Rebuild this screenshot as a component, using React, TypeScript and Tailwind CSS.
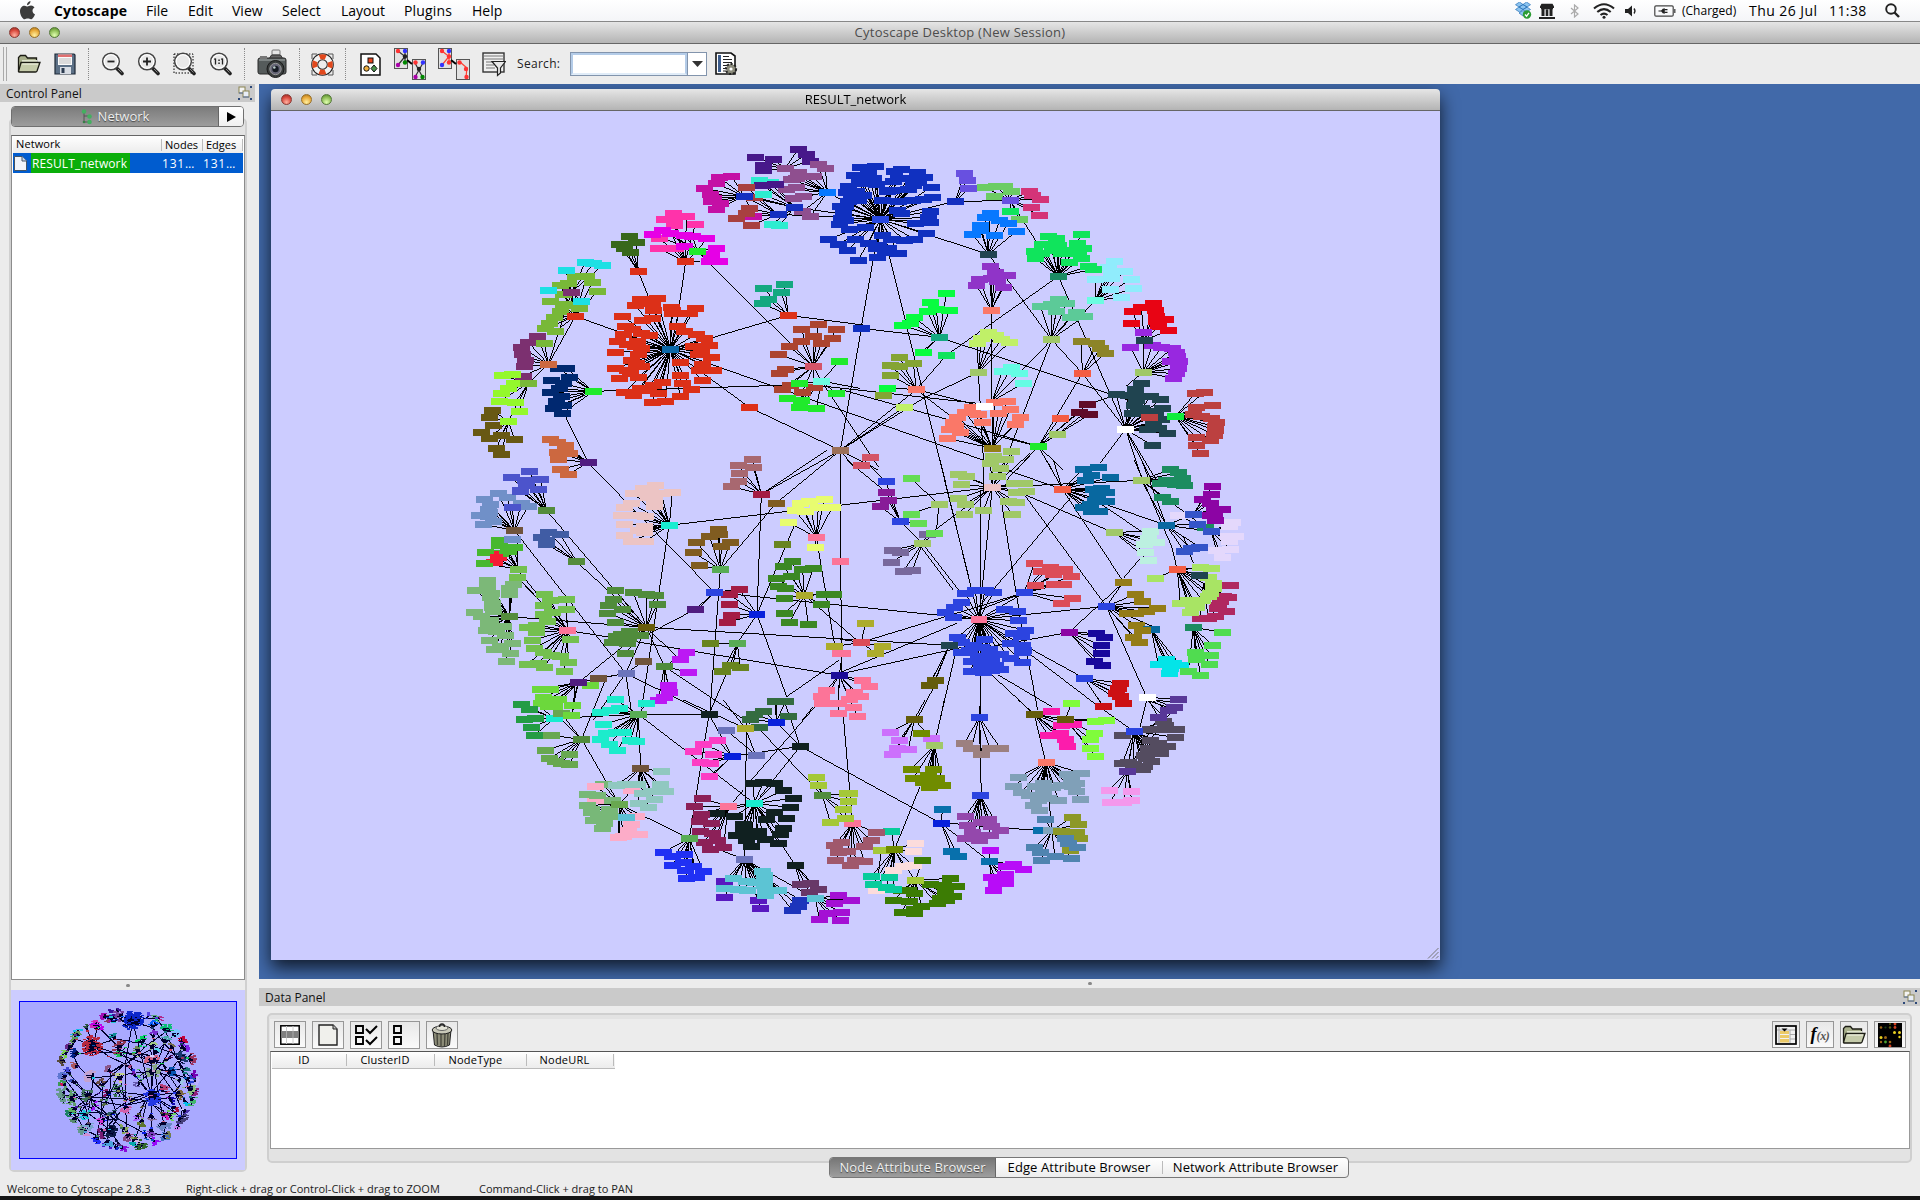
import React from "react";

/* ---------- network data ----------
   Coordinates are in thirds of a pixel, relative to the origin of a region.
   Cluster: [node colour, hub x, hub y, hub colour ("" = hidden), x/y pairs of nodes] */
type Cluster = [string, number, number, string, string];
type Region = { x: number; y: number; clusters: Cluster[]; edges: string };

const regions: Region[] = [
  {
    x: 460, y: 130,
    clusters: [
      ["#47188a", 950, 105, "", "990,48 1015,63 1025,84 861,72 915,78 885,95 885,111"],
      ["#8f4f8f", 1077, 177, "#0878ff", "950,105 990,117 1050,94 1071,105 1035,130 969,138 985,135 985,162 955,168 1005,190 975,195 1002,235 1026,249"],
      ["#2eecd0", 978, 222, "#1530c0", "872,141 905,148 885,183 911,273 933,276"],
      ["#47188a", 978, 222, "#1530c0", "882,156 921,153"],
      ["#c40fa5", 828, 189, "#1530c0", "790,129 753,132 744,150 708,165 726,183 735,196 729,205 756,210 744,228 855,248"],
      ["#a84040", 930, 243, "#1530c0", "834,162 858,192 843,225 834,240 804,255 849,276"],
      ["#2eecd0", 828, 189, "#1530c0", "885,183"],
      ["#ff33aa", 651, 384, "#dd3018", "615,240 654,249 588,258 618,262 618,276 681,273 573,315 570,345 621,345"],
      ["#e600e6", 687, 354, "#20ea2c", "582,291 552,303 606,300 648,306 672,309 714,315 648,339 744,345 730,362 723,384 753,384"],
      ["#38681c", 510, 414, "#dd3018", "483,309 453,333 504,327 468,345 486,357"],
      ["#78b838", 321, 549, "#dd3018", "321,429 354,430 372,447 300,450 276,456 387,474 285,484 246,504 285,513 306,515 333,525 276,534 258,552 243,570 231,585 261,594"],
      ["#1ce0e4", 309, 477, "#7c3070", "351,387 375,390 402,396 294,411 240,471 339,504"],
      ["#7c3070", 240, 693, "#cc6840", "207,609 180,627 159,642 162,663 171,681 168,700 165,729"],
      ["#78b838", 240, 693, "#cc6840", "228,630"],
      ["#94f82c", 180, 750, "#78b838", "102,726 132,723 138,750 120,765 99,780 93,804 141,807 153,834"],
      ["#685814", 120, 864, "#94f82c", "72,831 63,852 75,876 39,897 99,906 63,915 138,918 84,945 99,963"],
      ["#002870", 375, 774, "#20ea2c", "270,705 294,705 303,732 249,741 285,750 246,777 273,765 279,790 264,805 255,825 285,815 282,840"],
      ["#cc6840", 360, 987, "#501c80", "246,918 267,927 291,936 291,948 267,957 303,960 270,978 276,1008 300,1023"],
      ["#dc3018", 606, 648, "#0c68a8", "516,498 567,495 501,516 552,510 555,530 522,561 552,555 462,549 609,522 612,530 630,540 681,525 663,540 612,540 627,579 471,579 648,594 492,588 465,603 519,600 543,606 684,603 708,615 447,624 477,632 507,624 519,645 501,640 675,640 723,636 700,652 690,663 441,657 489,680 510,663 636,687 729,672 504,690 441,705 477,710 519,700 486,720 702,693 735,711 693,712 453,735 510,732 636,726 702,741 516,765 555,756 582,747 642,750 468,777 495,786 540,770 570,780 669,768 552,807 591,804 636,789"],
      ["#14a880", 960, 546, "#dd3018", "885,465 948,453 939,477 900,499 882,510"],
      ["#ac4430", 1035, 699, "#d45468", "1050,573 999,588 1104,588 1035,609 1092,615 999,624 1059,630 963,640 930,663 951,708 933,720 942,768 966,757 1038,762 1002,777"],
      ["#20ea2c", 1059, 744, "#6cfce0", "1113,684 993,750 1104,780 957,795 999,801 993,822 1044,825"],
      ["#dd3018", 606, 648, "#0c68a8", "843,822"],
      ["#9c7058", 1116, 951, "#9c7058", "1116,951"],
    ],
    edges: "535,424,600,590 307,840,384,997 631,660,346,559 631,660,985,556 985,556,1209,585 401,784,1084,762 868,832,1141,961 631,660,1597,1000 712,365,1060,709 677,394,650,580 1204,595,1141,961 1084,753,1200,775 1060,765,1573,822 1084,753,1255,1010 1102,187,1261,268 1003,232,1261,268 955,253,1261,268 853,199,1003,232 853,199,955,253 877,199,1003,232 346,559,265,703 334,487,265,703 265,703,205,760 205,760,144,874 712,365,677,394 720,395,677,394 1060,709,1084,753 346,559,334,487 320,430,346,559",
  },
  {
    x: 840, y: 130,
    clusters: [
      ["#1030c0", 96, 258, "#2848e0", "36,102 81,99 18,126 60,120 33,140 75,135 0,159 45,150 84,154 138,114 159,108 207,117 150,135 180,135 228,132 135,145 195,155 195,140 249,162 210,147 -6,177 24,175 45,186 12,192 117,173 180,168 130,170 0,205 10,190 -24,219 -15,240 30,200 102,200 150,205 192,200 252,192 225,197 -8,220 146,232 160,240 246,234 240,252 200,270 246,267 -20,255 -10,262 -27,273 3,288 50,282 234,300 102,306 21,318 -60,318 -30,333 130,318 168,320 198,318 60,330 90,335 120,345 -3,351 84,345 150,361 30,381 87,372 110,357"],
      ["#6850e0", 321, 204, "#1530c0", "348,120 357,141 360,165"],
      ["#6ccc64", 486, 201, "", "411,162 444,159 468,159 490,173 438,189 513,258"],
      ["#d43478", 486, 201, "#6850e0", "543,174 552,187 576,198 549,222 573,246"],
      ["#10e45c", 486, 201, "#6850e0", "486,234"],
      ["#0878ff", 420, 363, "#204450", "426,240 411,252 453,262 480,270 396,276 396,290 372,303 438,306 504,294"],
      ["#90ecfc", 741, 501, "#6cfce0", "798,384 780,402 828,414 741,438 790,420 790,435 849,438 786,468 855,465 819,492"],
      ["#10e45c", 630, 429, "#1c8c64", "699,303 600,309 625,316 582,333 630,337 687,330 558,354 612,350 660,350 705,345 561,375 580,360 640,360 690,360 663,386 700,375 735,408 720,399"],
      ["#e80414", 888, 621, "#204450", "915,510 879,522 852,534 921,530 924,548 849,570 924,563 951,558 930,580 960,591"],
      ["#9828e0", 885, 717, "#a0c868", "885,597 846,642 912,636 940,642 972,645 985,657 988,668 966,685 993,685 990,705 985,720 975,735"],
      ["#5cca98", 609, 618, "#a0c868", "630,498 576,519 610,512 654,510 624,534 684,537 708,549 666,552"],
      ["#9034c8", 429, 531, "#fa7868", "426,399 440,418 478,426 393,438 430,435 384,456 447,445 465,462"],
      ["#08fc40", 273, 612, "#14a880", "294,480 246,507 237,534 264,528 303,531 198,552 186,570 162,576 225,657"],
      ["#c0f068", 390, 717, "#a0c868", "420,597 441,605 399,615 387,630 459,618 483,627"],
      ["#84a434", 204, 768, "#fa7868", "153,672 126,696 195,690 152,700 126,726"],
      ["#08fc40", 204, 768, "#fa7868", "117,765"],
      ["#64fce4", 432, 803, "", "489,702 462,714 513,720 525,750"],
      ["#fa7868", 432, 945, "#948018", "438,808 477,804 372,822 486,828 350,836 390,843 450,840 327,852 516,852 315,867 402,867 501,873 303,888 336,897 297,915 320,880"],
      ["#8c8428", 702, 720, "#f45c44", "699,624 744,630 757,645 771,661"],
      ["#600c28", 570, 939, "#20ea2c", "717,813 693,837 723,844"],
      ["#204450", 831, 888, "#ffffff", "879,750 861,768 804,783 840,786 865,800 860,785 907,790 936,798 858,815 880,825 852,840 870,835 900,835 942,825 920,845 939,858 915,870 897,888 930,885 957,900 912,936"],
      ["#bc4040", 981, 849, "#10ec3c", "1068,777 1041,780 1092,816 1044,822 1035,843 1060,848 1089,855 1103,867 1101,880 1100,890 1098,905 1086,920 1044,912 1044,936 1056,960 903,852"],
      ["#ffffff", 408, 819, "#ffffff", "408,819"],
      ["#10e45c", 294, 666, "#10e45c", "294,666"],
      ["#84a434", 105, 786, "#84a434", "105,786"],
      ["#c0f068", 168, 822, "#c0f068", "168,822"],
      ["#f45c44", 636, 855, "#f45c44", "636,855"],
      ["#a0c868", 627, 903, "#a0c868", "627,903"],
      ["#d45468", 66, 972, "#d45468", "39,996"],
      ["#1030c0", 39, 585, "#1030c0", "39,585"],
    ],
    edges: "121,268,346,214 346,214,511,212 121,268,446,373 446,373,635,629 511,212,655,439 121,268,63,595 121,268,417,1468 63,595,298,622 298,622,880,815 655,439,319,676 319,676,229,779 453,541,457,955 415,727,432,1020 655,439,857,898 635,629,727,730 635,629,455,815 635,629,510,955 727,730,595,949 727,730,857,898 909,727,857,770 857,898,780,1000 857,898,910,1060 857,898,940,1060 857,898,955,1060 0,778,310,865 310,865,595,949 229,779,457,955 229,779,1,961 595,949,530,1020 595,949,500,1050 595,949,635,1020 595,949,670,1020 595,949,652,913 652,913,740,845 415,727,250,805 250,805,1,961 193,832,1,961 298,622,240,670 595,949,457,915 595,949,660,865 1,961,115,1020 1,961,40,1010 766,511,730,550 229,779,400,822 741,823,815,800",
  },
  {
    x: 460, y: 460,
    clusters: [
      ["#7090c8", 138, 201, "#70543c", "90,90 48,108 117,102 65,122 159,120 180,128 60,138 33,156 60,160 45,183 75,174 62,148"],
      ["#4c54cc", 234, 141, "#548c3c", "183,24 129,42 171,50 216,48 156,80 175,65 210,78 156,84"],
      ["#4c54cc", 138, 201, "#70543c", "132,132"],
      ["#7090c8", 132, 228, "#7090c8", "132,228"],
      ["#405ca4", 324, 294, "#548c3c", "240,207 219,222 276,213 235,232 234,243"],
      ["#48b830", 150, 318, "#74c050", "93,231 93,245 138,252 120,263 51,267 95,270 48,300"],
      ["#7cb878", 123, 459, "#548c3c", "57,351 57,368 135,363 21,381 124,374 70,390 123,393 66,402 72,420 72,432 18,447 75,445 39,459 66,470 60,480 66,490 54,501 105,490 111,516 84,505 63,531 132,540 78,558 126,570 114,594 95,548"],
      ["#74c050", 297, 501, "#fc7498", "228,393 294,408 245,410 225,426 294,438 225,453 251,447 237,474 177,492 204,485 204,507 192,531 306,528 198,555 225,567 249,577 276,579 177,603 210,600 300,597 228,612 288,624 147,342"],
      ["#508c3c", 534, 492, "#685c0c", "441,381 495,387 535,393 561,396 435,408 420,426 567,423 462,438 417,450 441,477 483,504 459,513 444,520 516,515 480,526 432,537 477,540 471,570"],
      ["#ecc4c4", 603, 186, "#18ecd0", "561,66 525,75 495,90 545,88 579,90 612,87 540,103 558,110 489,120 558,130 467,132 460,156 510,156 530,160 467,183 528,190 510,200 528,206 467,217 489,234 531,234"],
      ["#a86870", 879, 93, "#a41c44", "852,-12 810,6 855,12 813,30 810,54 789,69"],
      ["#805c20", 756, 318, "#58ac54", "750,198 753,214 723,219 684,237 786,237 759,249 675,267 693,306"],
      ["#e8fc70", 1044, 222, "#fc7498", "1068,108 1023,114 996,120 981,142 1010,145 1050,132 1092,132 960,177 1041,252"],
      ["#3c8824", 1008, 396, "#acac2c", "972,294 945,309 1003,318 1035,315 924,345 969,339 930,369 951,375 1068,393 1095,393 948,405 1059,423 948,450 963,477 1020,483"],
      ["#a41c44", 866, 453, "#0820dc", "813,378 783,393 783,423 789,456 777,477"],
      ["#688420", 807, 540, "#58ac54", "726,540 786,606 816,612 762,624"],
      ["#bc18f4", 588, 609, "#508c3c", "654,567 636,588 660,627 600,666 603,687 588,702 570,711"],
      ["#6cd83c", 330, 657, "#501c80", "216,678 246,678 366,666 225,702 270,708 219,720 240,728 259,730 312,726 309,756"],
      ["#249c44", 258, 765, "#18ecd0", "159,723 183,737 168,768 200,765 189,792 198,816"],
      ["#1ceccc", 510, 753, "#58ac54", "441,708 534,720 453,735 425,742 396,747 405,783 414,810 444,808 465,807 396,828 423,843 486,831 504,834 447,861"],
      ["#fc7498", 1113, 636, "#1c0c98", "1122,570 1074,681 1059,698 1062,720 1110,720 1158,687 1155,732 1110,750 1167,759 1182,651 1203,669 1176,699 1143,708"],
      ["#346c40", 924, 777, "#0820dc", "921,714 951,714 885,744 858,752 846,768 960,759 873,792"],
      ["#805c20", 924, 120, "#805c20", "924,120"],
      ["#fc7498", 1116, 294, "#fc7498", "1116,294"],
      ["#688420", 942, 243, "#688420", "942,243"],
      ["#501c80", 738, 387, "#2c44e0", "681,438"],
      ["#acac2c", 1098, 549, "#acac2c", "1098,549"],
      ["#70543c", 474, 630, "#6c74bc", "525,594 390,645"],
      ["#102020", 723, 753, "#102020", "723,753"],
    ],
    edges: "384,8,763,397 259,151,559,502 163,211,497,640 349,305,520,460 172,238,172,328 174,352,322,511 155,370,148,470 148,470,559,502 322,511,1138,646 559,502,1468,556 627,196,1597,82 627,196,545,745 706,448,559,525 763,397,1557,478 904,103,891,463 948,130,781,328 904,103,1141,-29 948,130,1141,-29 904,103,1100,-29 1141,-29,1144,640 781,328,750,753 891,463,832,550 891,463,980,710 891,463,1010,180 1069,232,1123,550 1033,406,1190,540 559,502,650,590 559,502,613,619 559,502,355,668 559,502,497,640 497,640,747,763 497,640,515,760 497,640,355,668 613,619,870,790 497,640,400,780 800,640,747,763 832,550,820,610 1138,600,980,710 1060,740,1027,780 763,397,820,390 763,397,720,440 172,328,230,400 1123,559,1200,548 344,680,340,750 240,740,282,775 110,300,172,328",
  },
  {
    x: 840, y: 460,
    clusters: [
      ["#a0c868", 432, 72, "#ecc0c4", "435,-20 471,-12 426,0 457,15 447,39 330,33 354,39 339,63 499,60 528,60 504,87 534,84 330,105 351,122 480,114 504,117 348,153 405,141 492,153 489,-36"],
      ["#881c98", 156, 174, "#2c44e0", "114,87 120,111 96,130"],
      ["#78689c", 222, 240, "#a0c868", "237,213 132,261 156,267 129,297 165,324 192,321"],
      ["#64dc54", 156, 174, "", "189,153 210,180"],
      ["#64dc54", 189, 45, "#64dc54", "189,45"],
      ["#64dc54", 222, 240, "#a0c868", "258,210"],
      ["#2c44e0", 392, 468, "#fc7498", "351,390 381,381 410,381 435,387 339,417 318,432 291,447 315,462 468,438 507,444 510,471 327,522 340,537 408,528 531,501 495,510 520,520 486,540 522,546 375,545 339,567 363,560 400,553 423,558 525,560 522,567 369,594 390,580 430,575 456,573 485,585 523,596 410,600 440,605 430,590 369,624 400,615 430,620 456,618 405,627"],
      ["#dc4c58", 528, 387, "#2c44e0", "558,300 606,312 579,325 648,318 615,333 669,339 561,366 618,363 645,363 672,405 639,420 635,325"],
      ["#0868a0", 642, 78, "#f45c44", "750,12 705,18 730,36 786,42 711,50 735,78 760,75 774,87 748,92 741,111 774,114 726,123 705,132 729,143 753,144"],
      ["#1c8c60", 879, 51, "#a0c868", "966,18 990,28 1002,45 955,52 936,60 980,62 1008,66 942,102 966,114 1070,192"],
      ["#e4d8fc", 1089, 204, "#3454c8", "990,156 1152,177 1143,190 1161,219 1140,219 1143,234 1104,261 1146,258 1122,282"],
      ["#3454c8", 954, 186, "#0868a0", "1035,153 1047,183 1089,204 1054,252 1030,256 1008,264"],
      ["#8c04a4", 1035, 153, "#3454c8", "1092,69 1089,93 1062,108 1085,120 1122,138 1098,138 1098,155 1086,155 1101,171"],
      ["#bcf0e0", 798, 207, "#a0c868", "906,204 900,225 924,237 888,243 891,267 900,291"],
      ["#b02860", 1065, 360, "", "1146,366 1124,400 1140,402 1116,415 1110,425 1107,435 1134,444 1100,459 1056,465 1080,465"],
      ["#a8e464", 987, 318, "#f45c44", "1056,312 1089,315 921,345 1080,342 1095,360 1095,375 1085,390 1080,400 1062,410 1020,411 996,420 1035,425 1026,447 1045,432"],
      ["#947c18", 774, 429, "#2c44e0", "825,357 861,393 882,414 927,435 837,450 860,449 895,445 864,486 855,522 873,537"],
      ["#04e4e8", 909, 498, "#0868a0", "954,588 930,603 975,600 996,605 965,615 963,630"],
      ["#50dc50", 1035, 492, "#1c8c60", "1122,507 1092,546 1041,567 1086,575 1060,577 1044,588 1083,603 1020,624 1056,636"],
      ["#18089c", 663, 507, "#8c04a4", "744,510 768,522 759,546 759,570 738,594 762,606"],
      ["#cc1014", 708, 645, "#2c44e0", "816,660 810,675 804,690 816,699 825,720 765,729"],
      ["#645c0c", 303, 546, "#204450", "261,651 243,666"],
      ["#acac2c", 39, 537, "#dc4c58", "51,480 102,549 81,570"],
      ["#583898", 897, 702, "#ffffff", "990,708 978,732 960,741 930,762"],
      ["#947c18", 882, 502, "#947c18", "882,502"],
      ["#2c44e0", 114, 54, "#2c44e0", "114,54"],
      ["#a0c868", 273, 123, "#a0c868", "273,123"],
      ["#204450", 1053, 336, "#204450", "1053,336"],
      ["#fc7498", -24, 570, "#fc7498", "-17,570"],
    ],
    edges: "20,0,139,97 80,10,137,64 137,64,181,184 181,184,247,250 247,250,360,395 235,250,340,390 297,133,290,205 200,165,297,133 285,210,457,82 300,0,417,478 430,0,430,100 421,90,422,478 457,82,417,478 214,57,297,133 485,130,540,470 540,470,593,750 545,100,823,219 457,82,904,61 550,100,799,439 690,115,417,440 667,88,850,365 667,88,500,30 667,88,620,0 667,88,640,0 667,88,979,196 780,130,905,215 904,61,979,196 883,0,995,260 995,260,1012,330 905,0,979,196 1060,310,1030,230 850,355,905,290 850,368,687,517 799,439,417,478 799,439,920,712 687,517,450,560 553,398,417,450 553,398,63,547 733,655,560,560 733,655,790,740 560,575,770,735 450,640,583,763 475,645,635,740 421,640,421,780 345,585,300,780 0,642,400,555 0,638,350,490 328,556,285,660 328,556,270,670 285,675,235,770 799,439,940,500 457,82,570,-20 457,82,520,-20 63,547,0,538 417,478,553,398 1012,330,1078,345 720,780,825,780",
  },
  {
    x: 460, y: 700,
    clusters: [
      ["#68a850", 339, 108, "#508c3c", "279,30 249,96 231,141 243,165 303,153 262,173 280,180 303,183"],
      ["#6cd83c", 309, 36, "#6cd83c", "309,36"],
      ["#fcacc8", 453, 303, "", "381,249 489,262 380,290 504,339 490,362 480,380 465,398 450,402 513,393"],
      ["#78b878", 453, 303, "#68a850", "405,243 357,273 387,276 432,291 357,306 370,318 423,318 369,327 390,332 426,340 375,351 408,360 402,375"],
      ["#fcacc8", 381, 249, "#fcacc8", "381,249"],
      ["#90c8c0", 516, 195, "#70543c", "579,204 444,246 471,243 507,243 576,243 591,264 522,270 550,265 558,288 510,300 540,312"],
      ["#5cc0d4", 474, 342, "#5cc0d4", "474,342"],
      ["#fc3cc4", 792, 159, "#0820dc", "747,111 705,123 675,144 735,153 696,177 726,180 723,219"],
      ["#102020", 858, 300, "#18ecd0", "855,240 885,237 918,240 945,262 975,285 966,312 954,345 918,328 894,347 744,330 798,339 825,363 825,380 804,396 834,400 834,412 849,428 869,384 869,400 945,375 936,393 890,408 930,420"],
      ["#8c2058", 780, 309, "#fc7498", "702,285 678,309 699,333 693,354 729,360 696,384 732,390 708,417 747,410 726,438 765,432"],
      ["#2030f4", 663, 405, "#58ac54", "585,447 648,453 612,460 612,486 645,477 675,489 651,502 705,504 654,525 684,523"],
      ["#5818c0", 828, 468, "#6c74bc", "768,534 768,582 870,591 876,615"],
      ["#5cc4d4", 828, 468, "#6c74bc", "882,504 888,515 795,525 888,530 834,535 860,537 888,545 768,555 810,558 837,561 891,562 930,561 891,576"],
      ["#1c34bc", 900, 530, "", "996,591 990,609 972,621"],
      ["#a410d4", 1041, 585, "#5cc4d4", "1110,576 1149,591 1098,600 1119,627 1077,630 1053,648 1116,650"],
      ["#683868", 981, 486, "#102020", "1026,540 996,543 1050,558 1023,567"],
      ["#a4c838", 1062, 276, "#508c3c", "1044,222 1050,246 1143,270 1140,294 1125,318 1131,345 1086,357"],
      ["#a0586c", 1152, 360, "#fc7498", "1119,417 1098,427 1110,447 1137,444 1101,471 1146,486 1161,471 1224,387 1209,411 1188,430 1188,474"],
      ["#6c74bc", 774, 81, "#6c74bc", "864,156"],
      ["#acac2c", 831, 75, "#acac2c", "831,75"],
      ["#102020", 996, 129, "#102020", "996,129"],
      ["#a4c838", 1131, 345, "#a4c838", "1131,345"],
    ],
    edges: "535,43,542,205 535,43,345,52 345,52,282,55 535,43,747,43 747,43,688,415 747,43,816,169 365,118,478,313 365,118,305,60 365,118,440,-70 478,313,688,415 688,415,853,478 853,478,1066,595 853,478,860,70 535,43,883,310 816,169,1021,139 870,245,1065,20 900,290,1021,139 820,305,850,270 856,85,885,160 856,85,670,0 856,85,949,67 900,90,1087,286 790,0,856,85 949,67,1021,139 975,10,1021,139 1021,139,1443,370 1150,50,1178,370 883,310,1006,496 816,169,765,220 883,310,805,319 949,67,950,0 478,313,478,400",
  },
  {
    x: 840, y: 700,
    clusters: [
      ["#cc70fc", 198, 48, "#645c0c", "126,87 153,111 249,105 180,138 147,135 132,153"],
      ["#708c00", 258, 126, "#a0c868", "255,198 189,198 195,225 240,216 265,225 225,237 250,243 283,246 243,252"],
      ["#708c00", 219, 90, "#708c00", "219,90"],
      ["#9c8080", 393, 42, "#2c44e0", "348,120 369,135 456,135 425,135 399,153"],
      ["#9448ac", 396, 276, "#2c44e0", "351,339 420,348 357,366 400,357 430,369 456,381 372,388 380,395 426,396 351,405 393,411"],
      ["#0870ac", 279, 360, "#0820dc", "282,318 309,444 330,459"],
      ["#b80cf8", 423, 474, "#0870ac", "426,441 495,483 474,489 525,498 471,513 429,522 444,540 471,530 471,540 435,561"],
      ["#80a0b8", 594, 177, "#fa7868", "510,222 495,249 656,213 699,210 670,228 560,250 585,240 612,252 640,245 684,240 672,250 519,267 543,276 684,264 585,276 570,290 630,291 600,285 697,288 555,306 573,321 585,268"],
      ["#0870ac", 579, 381, "#0870ac", "579,381"],
      ["#8c9828", 610, 381, "#80a4bc", "672,342 690,363 639,384 684,387 693,405 666,441"],
      ["#5084b0", 610, 381, "", "591,348 651,405 660,420 687,432 558,432 576,448 579,471 620,459 669,465"],
      ["#8c9828", 639, 384, "#8c9828", "639,384"],
      ["#fc1cac", 558, 33, "#645c0c", "609,24 639,66 676,63 600,96 636,90 652,108 657,129"],
      ["#80fc3c", 651, 48, "#645c0c", "669,0 741,54 774,51 738,90 726,108 726,135 741,159"],
      ["#f498ec", 837, 204, "#583898", "783,261 849,264 850,291 825,297 786,297"],
      ["#544c60", 858, 84, "#2c44e0", "945,54 905,78 984,78 950,66 950,78 981,102 822,96 906,111 930,120 930,135 957,129 900,135 900,147 936,150 888,156 895,165 910,174 855,183 888,190 882,197 840,178 822,180"],
      ["#583898", 837, 204, "#583898", "837,204 930,42 978,12"],
      ["#fcdcdc", 138, 438, "#708c00", "201,420 195,444 195,486 165,490 135,501 84,561"],
      ["#3c7c04", 201, 531, "#a4c838", "222,471 306,525 246,543 285,545 325,549 180,562 199,570 160,562 290,567 315,579 276,584 295,590 135,591 183,594 267,600 220,610 162,627 199,630 199,618"],
      ["#08cc9c", 138, 438, "", "129,384 69,519 123,522 75,543 114,552 135,559"],
      ["#a4c838", 99, 441, "#a4c838", "99,441"],
      ["#708c00", 138, 438, "#708c00", "138,438"],
      ["#a0586c", 12, 360, "#fc7498", "84,387 69,411 48,430 48,474 6,487 21,471"],
      ["#a4c838", -9, 345, "#a4c838", "-9,345 -3,270"],
    ],
    edges: "223,58,255,0 313,0,283,136 240,260,163,450 418,54,424,286 421,0,418,54 583,43,617,187 535,0,583,43 617,187,635,390 303,370,380,373 421,380,604,391 303,370,448,484 448,484,450,450 882,95,750,0 920,0,900,80 920,0,993,25 920,0,960,40 920,0,1000,5 163,450,226,542 124,450,115,525 583,43,676,58 882,95,862,216 676,58,760,62",
  },
];

const pairs = (s: string) => s.split(" ").map((p) => p.split(",").map(Number));

function NetworkGraph() {
  return (
    <>
      {regions.map((r, i) => (
        <g key={i} transform={`translate(${r.x} ${r.y}) scale(0.33333)`}>
          {r.clusters.map(([, hx, hy, , list], k) =>
            pairs(list).map(([x, y], n) => (
              <line key={`${k}-${n}`} x1={hx + 25} y1={hy + 10} x2={x + 25} y2={y + 10} />
            ))
          )}
          {pairs(r.edges).map(([a, b, c, d], k) => (
            <line key={k} x1={a} y1={b} x2={c} y2={d} />
          ))}
        </g>
      ))}
      {regions.map((r, i) => (
        <g key={i} stroke="none" transform={`translate(${r.x} ${r.y}) scale(0.33333)`}>
          {r.clusters.map(([c, , , , list], k) =>
            pairs(list).map(([x, y], n) => <rect key={`${k}-${n}`} x={x} y={y} width={51} height={21} fill={c} />)
          )}
          {r.clusters.map(([, hx, hy, hc], k) => hc && <rect key={k} x={hx} y={hy} width={50} height={21} fill={hc} />)}
        </g>
      ))}
      {/* compact star-shaped group on the left rim */}
      <path
        stroke="none"
        fill="#f41c34"
        transform="translate(460 460) scale(0.33333)"
        d="M102 273H117V282H129V291H141V303H129V318H99V309H90V300H78V297H90V282H102Z"
      />
    </>
  );
}

/* ---------- small parts ---------- */
function Lights() {
  const ball = "h-[11px] w-[11px] rounded-full border";
  return (
    <div className="flex gap-[9px]">
      <i className={`${ball} border-[#8a3a34] bg-[radial-gradient(circle_at_50%_80%,#ffb0a0,#d8483c_60%,#8c2a22)]`} />
      <i className={`${ball} border-[#96702a] bg-[radial-gradient(circle_at_50%_80%,#fff0a0,#e8a838_60%,#a06c18)]`} />
      <i className={`${ball} border-[#54783a] bg-[radial-gradient(circle_at_50%_80%,#e0ffb0,#8cbc54_60%,#4c7c28)]`} />
    </div>
  );
}

const Folder = ({ w = 24 }: { w?: number }) => (
  <svg width={w} height={(w * 20) / 24} viewBox="0 0 24 20">
    <path d="M1.5 17V3.5L3.5 1.5H8.5L10.5 4H19.5V8" fill="#a9b08c" stroke="#1c1c14" strokeWidth="1.3" />
    <path d="M5 6H20V8.5H5Z" fill="#dfe4cd" />
    <path d="M1.5 17.5L4 8.5H23L20 17Q19.6 18 18.5 18H2Z" fill="#c5cbaa" stroke="#1c1c14" strokeWidth="1.3" />
    <path d="M5.2 10H21" stroke="#eef0df" strokeWidth="1.2" />
  </svg>
);

const Magnifier = ({ children, dotted }: { children?: React.ReactNode; dotted?: boolean }) => (
  <svg width="24" height="24" viewBox="0 0 24 24">
    {dotted && <rect x="1" y="2" width="19" height="19" fill="none" stroke="#000" strokeDasharray="1.5 1.5" />}
    <path d="M15.500 16L21 21.500" stroke="#222" strokeWidth="3.600" strokeLinecap="round" />
    <path d="M17 17L20.500 20.500" stroke="#888" strokeWidth="1" />
    <circle cx="10" cy="9.500" r="8.300" fill="#e9e9e9" stroke="#444" strokeWidth="1.500" />
    <circle cx="10" cy="9.500" r="6.800" fill="none" stroke="#fff" strokeWidth="1.100" />
    {children}
  </svg>
);

const Sep = () => <i className="h-[32px] w-px border-l border-dotted border-[#8a8a8a]" />;

const MiniNet = ({ red }: { red?: boolean }) => (
  <svg width="32" height="32" viewBox="0 0 32 32">
    <rect x=".5" y=".5" width="13" height="20" fill="#e2e2e2" stroke="#555" />
    <rect x="18.500" y="11.500" width="13" height="20" fill="#e2e2e2" stroke="#555" />
    <g stroke={red ? "#ff4030" : "#333"} strokeWidth="1.2">
      <path d="M4 3L11 8.500L4 17M11 3V14" fill="none" />
      <path d={red ? "M22 14L29 20L28 29" : "M21 15L28 28M29 15L21 29"} fill="none" />
    </g>
    <path d="M13 12L18 16" stroke="#000" strokeWidth="2" />
    <g>
      <circle cx="4" cy="3" r="2.200" fill="#f33" />
      <circle cx="11" cy="3" r="2.200" fill="#33f" />
      <circle cx="11" cy="8.500" r="2.200" fill={red ? "#f33" : "#222"} />
      <circle cx="4" cy="17" r="2.200" fill={red ? "#33f" : "#a0a"} />
      <circle cx="11" cy="14.500" r="2.200" fill={red ? "#f33" : "#080"} />
      <circle cx="21.500" cy="14.500" r="2.200" fill="#f33" />
      {!red && <circle cx="29" cy="14.500" r="2.200" fill="#33f" />}
      <circle cx={red ? 28 : 25} cy="21" r="2.200" fill={red ? "#f33" : "#222"} />
      {!red && <circle cx="21.500" cy="29" r="2.200" fill="#a0a" />}
      <circle cx="28.500" cy="29" r="2.200" fill={red ? "#f33" : "#080"} />
    </g>
  </svg>
);

const FloatIcon = () => (
  <svg width="14" height="14" viewBox="0 0 14 14">
    <rect x="1" y="1" width="6" height="6" fill="#f4f4f4" stroke="#8a8450" />
    <rect x="5" y="5" width="6" height="6" fill="#e8eef8" stroke="#8a8450" />
    <path d="M5 11H11M1 7H5" stroke="#5872a8" />
    <path d="M12 0h2v2h-2zM0 12h2v2H0zM12 12h2v2h-2z" fill="#2c4878" />
  </svg>
);

const Btn = ({ className, children }: { className: string; children: React.ReactNode }) => (
  <div className={`flex items-center justify-center border border-[#979797] bg-gradient-to-b from-[#e8e8e8] to-[#fafafa] ${className}`}>{children}</div>
);

function MenuBar() {
  return (
    <header className="flex h-[21px] shrink-0 items-center bg-gradient-to-b from-white to-[#f4f5f8] pr-[20px] pl-[19px] text-[14px] leading-[21px] text-black">
      <svg width="17" height="19" viewBox="0 0 17 19" className="mr-[18px]">
        <path d="M11.500 0C11.600 2 10 4.200 8 4.300C7.800 2.300 9.600.3 11.500 0ZM8.500 5.500C9.300 5.500 10.400 4.600 12 4.600C13.400 4.600 14.700 5.400 15.500 6.500C12.600 8.200 13 12 16 13.200C15.300 15.300 13.600 18.300 12 18.300C10.800 18.300 10.200 17.600 8.800 17.600C7.300 17.600 6.700 18.300 5.600 18.300C3.800 18.300 1 14 1 10.200C1 6.700 3.300 4.700 5.500 4.700C6.900 4.700 7.800 5.500 8.500 5.500Z" fill="#3c3c3c" />
      </svg>
      <b className="w-[92px] tracking-[0.200px]">Cytoscape</b>
      <span className="w-[42px]">File</span>
      <span className="w-[44px]">Edit</span>
      <span className="w-[50px]">View</span>
      <span className="w-[59px]">Select</span>
      <span className="w-[63px]">Layout</span>
      <span className="w-[68px] tracking-[0.150px]">Plugins</span>
      <span>Help</span>
      <div className="ml-auto flex items-center whitespace-nowrap">
        <svg width="17" height="17" viewBox="0 0 17 17" className="mr-[7px]">
          <path d="M4.500 0L8 2.500L4 5L.5 2.700ZM11.500 0L8 2.500L12 5L15.500 2.700ZM4 5L.5 7.500L4.500 10L8 7.500ZM12 5L15.500 7.500L11.500 10L8 7.500ZM4 11L8 8.500L12 11L8 14ZM4 5L8 2.500L12 5L8 7.500Z" fill="#8cc4f0" stroke="#2a72b8" strokeWidth=".7" />
          <circle cx="12" cy="12.500" r="4.200" fill="#2c9c34" />
          <path d="M10 12.500L11.600 14.200L14 10.800" stroke="#fff" strokeWidth="1.300" fill="none" />
        </svg>
        <svg width="16" height="16" viewBox="0 0 16 16" className="mr-[15px]">
          <path d="M1 3.500L2.500 .8H13.500L15 3.500V5H1ZM2.500 5H5.500V13H2.500ZM10.500 5H13.500V13H10.500ZM6.700 6.500H9.300V13H6.700ZM0 14H16V16H0ZM2 5H14V6.200H2Z" fill="#222" />
        </svg>
        <svg width="9" height="14" viewBox="0 0 9 14" className="mr-[14px]">
          <path d="M1 4L8 10L4.500 13V1L8 4L1 10" fill="none" stroke="#aaa" strokeWidth="1.200" />
        </svg>
        <svg width="22" height="16" viewBox="0 0 22 16" className="mr-[10px]">
          <g fill="none" stroke="#222" strokeWidth="2.100">
            <path d="M1 5.500Q11-3 21 5.500M4.300 9Q11 3.300 17.700 9M7.500 12Q11 9.300 14.500 12" />
          </g>
          <circle cx="11" cy="14.300" r="1.500" fill="#222" />
        </svg>
        <svg width="12" height="12" viewBox="0 0 12 12" className="mr-[17px]">
          <path d="M0 4H3L7 .5V11.500L3 8H0Z" fill="#222" />
          <path d="M9 3.500Q11 6 9 8.500" fill="none" stroke="#222" strokeWidth="1.300" />
        </svg>
        <svg width="22" height="12" viewBox="0 0 22 12" className="mr-[6px]">
          <path d="M4 .8H2Q.8.8.8 2V10Q.8 11.200 2 11.200H4M15 11.200H18Q19.200 11.200 19.200 10V2Q19.200.8 18 .8H4M4 11.200H15" fill="none" stroke="#444" strokeWidth="1.200" />
          <path d="M20.800 4V8" stroke="#444" strokeWidth="1.300" />
          <path d="M7.500 5.200Q8.200 3.300 10.800 3.300V8.700Q8.200 8.700 7.500 6.800Z" fill="#222" />
          <path d="M4.500 6H8M10.500 4.600H13.500M10.500 7.400H13.500" stroke="#222" strokeWidth="1.200" />
        </svg>
        <span className="w-[67px] text-[12px]">(Charged)</span>
        <span className="w-[80px] text-[14px] tracking-[0.450px]">Thu 26 Jul</span>
        <span className="w-[56px] text-[14px] tracking-[0.400px]">11:38</span>
        <svg width="15" height="15" viewBox="0 0 15 15">
          <circle cx="6" cy="6" r="4.800" fill="none" stroke="#222" strokeWidth="1.900" />
          <path d="M9.500 9.500L14 14" stroke="#222" strokeWidth="2.400" />
        </svg>
      </div>
    </header>
  );
}

function Toolbar() {
  return (
    <div className="flex h-[40px] shrink-0 items-center bg-[#ececec] pl-[3px] text-[12px] text-[#222]">
      <i className="mr-[10px] h-[34px] w-[4px] border-x border-[#aaa]" />
      <Folder />
      <svg width="22" height="22" viewBox="0 0 22 22" className="ml-[13px] mr-[12px]">
        <path d="M1 1H20L21 2V21H1Z" fill="#5c7086" stroke="#1e2a38" strokeWidth="1.200" />
        <rect x="4" y="1.500" width="14" height="10.500" fill="#fafafa" />
        <rect x="4" y="1.500" width="14" height="2.500" fill="#e07070" />
        <path d="M5 6H17M5 8H17M5 10H17" stroke="#bbb" />
        <rect x="6" y="14" width="11" height="7" fill="#d8dde4" />
        <rect x="7.500" y="15" width="3" height="5" fill="#2c3c50" />
      </svg>
      <Sep />
      <div className="ml-[12px] mr-[11px] flex gap-[12px]">
        <Magnifier><path d="M6.500 9.500H13.500" stroke="#222" strokeWidth="1.800" /></Magnifier>
        <Magnifier><path d="M6 9.500H14M10 5.500V13.500" stroke="#222" strokeWidth="1.800" /></Magnifier>
        <Magnifier dotted />
        <Magnifier><path d="M6.500 6.500V12.500M13.500 6.500V12.500M5.300 7.500L6.500 6.500M12.300 7.500L13.500 6.500" stroke="#222" strokeWidth="1.300" /><path d="M9.300 7.500h1.500v1.500h-1.500zM9.300 10.500h1.500V12h-1.500z" fill="#222" /></Magnifier>
      </div>
      <Sep />
      <svg width="30" height="30" viewBox="0 0 30 30" className="ml-[12px] mr-[12px]">
        <rect x="15" y="1" width="8" height="5" rx="1" fill="#e6e6e6" stroke="#777" />
        <path d="M12 10L14.500 6H23.500L26 10Z" fill="#666" stroke="#333" />
        <rect x="1" y="9" width="28" height="16" rx="2" fill="#555b5b" stroke="#2a2a2a" />
        <path d="M2 11H28" stroke="#8c9292" strokeWidth="1.500" />
        <rect x="3" y="7" width="7" height="3" fill="#777" />
        <circle cx="18.500" cy="20" r="8.500" fill="#383c3c" stroke="#1a1a1a" />
        <circle cx="18.500" cy="20" r="5.700" fill="#667" stroke="#999" />
        <circle cx="18.500" cy="20" r="3.200" fill="#151a22" />
        <circle cx="17.300" cy="18.500" r="1.300" fill="#bcc" />
      </svg>
      <Sep />
      <svg width="23" height="23" viewBox="0 0 23 23" className="ml-[11px] mr-[11px]">
        <circle cx="11.500" cy="11.500" r="7.800" fill="none" stroke="#222" strokeWidth="7" />
        <circle cx="11.500" cy="11.500" r="7.800" fill="none" stroke="#f2f2f2" strokeWidth="5" />
        <circle cx="11.500" cy="11.500" r="7.800" fill="none" stroke="#e2481c" strokeWidth="5" strokeDasharray="6.125 6.125" strokeDashoffset="3.060" />
        <path d="M1 6L1 1H6M17 1H22V6M22 17V22H17M6 22H1V17" fill="none" stroke="#555" />
      </svg>
      <Sep />
      <svg width="21" height="23" viewBox="0 0 21 23" className="ml-[14px] mr-[13px]">
        <path d="M1 1H16L20 5V22H1Z" fill="#fff" stroke="#111" strokeWidth="1.500" />
        <rect x="8" y="5" width="5" height="5" fill="#e8441c" stroke="#111" />
        <circle cx="6.500" cy="15.500" r="2.700" fill="#f0b040" stroke="#111" />
        <path d="M14 12L17 15.500L14 19L11 15.500Z" fill="#48944c" stroke="#111" />
      </svg>
      <MiniNet />
      <div className="ml-[12px] mr-[12px]"><MiniNet red /></div>
      <svg width="24" height="25" viewBox="0 0 24 25" className="mr-[11px]">
        <rect x="1" y="1" width="21" height="19" fill="#f0f0f0" stroke="#333" strokeWidth="1.400" />
        <path d="M1 4H22M1 7H22M4 10H11M4 13H12M4 16H13" stroke="#777" />
        <path d="M10 9.500H23.500L18.500 16V21L15.500 23.500V16Z" fill="#e8e8e8" stroke="#222" strokeWidth="1.200" />
      </svg>
      <span className="w-[53px] tracking-[0.300px]">Search:</span>
      <div className="flex h-[24px] w-[137px] border border-[#8294ac] bg-white">
        <div className="flex-1 border-2 border-t-[#b4cce8] border-r-[#b4cce8] border-b-[#e0ecf8] border-l-[#b4cce8]" />
        <div className="flex w-[19px] items-center justify-center border-l border-[#8294ac]">
          <svg width="11" height="6" viewBox="0 0 11 6"><path d="M0 0H11L5.500 6Z" fill="#333" /></svg>
        </div>
      </div>
      <svg width="23" height="24" viewBox="0 0 23 24" className="ml-[8px]">
        <path d="M1 1H16L20 4V22H1Z" fill="#fff" stroke="#111" strokeWidth="1.600" />
        <rect x="3" y="3" width="3" height="17" fill="#3c5c8c" />
        <path d="M8 4.500H14M8 7.500H17M8 10.500H17M8 13.500H12M8 16.500H11M8 19H11" stroke="#222" />
        <circle cx="16" cy="17" r="4.800" fill="#7c7c6c" stroke="#222" strokeWidth="2.600" strokeDasharray="2 1.600" />
        <circle cx="16" cy="17" r="4" fill="#8c8c7c" />
        <circle cx="16" cy="17" r="1.600" fill="#fff" />
      </svg>
    </div>
  );
}

function ControlPanel() {
  return (
    <aside className="flex w-[255px] shrink-0 flex-col">
      <div className="flex h-[18px] shrink-0 items-center justify-between bg-[#cacaca] pr-[3px] pl-[6px] text-[12px] text-[#111]">
        <span className="pt-[2px]">Control Panel</span>
        <FloatIcon />
      </div>
      <div className="mt-[4px] mr-[8px] ml-[9px] flex h-[1066px] flex-col">
        <div className="z-10 mr-[3px] ml-[2px] flex h-[21px] shrink-0 overflow-hidden rounded-[4px] border border-[#707070] text-[13px]">
          <div className="flex flex-1 items-center justify-center gap-[6px] bg-gradient-to-b from-[#7c7c7c] to-[#9c9c9c] text-white [text-shadow:0_1px_1px_#444]">
            <svg width="11" height="16" viewBox="0 0 11 16" className="shrink-0">
              <path d="M3 3V13H8M3 7H8" fill="none" stroke="#555" />
              <circle cx="3" cy="2.500" r="2.300" fill="#44b060" />
              <circle cx="8.500" cy="7.500" r="2.300" fill="#44b060" />
              <circle cx="8.500" cy="13" r="2.300" fill="#44b060" />
              <circle cx="3" cy="13" r="1.300" fill="#388048" />
            </svg>
            <span className="text-[#eee]">Network</span>
          </div>
          <div className="flex w-[25px] items-center justify-center border-l border-[#666] bg-gradient-to-b from-white to-[#f0f0f0]">
            <svg width="9" height="10" viewBox="0 0 9 10"><path d="M0 0L9 5L0 10Z" fill="#000" /></svg>
          </div>
        </div>
        <div className="-mt-[9px] flex min-h-0 flex-1 flex-col rounded-[5px] border-2 border-[#d0d0d0] bg-[#e4e4e4] pt-[15px]">
          <div className="flex h-[845px] shrink-0 flex-col border border-[#8c8c8c] border-t-[#666] bg-white p-px pt-0">
            <div className="flex h-[17px] shrink-0 items-center bg-gradient-to-b from-white to-[#ececec] text-[11px] text-black">
              <span className="w-[148px] pl-[3px] tracking-[0.100px]">Network</span>
              <span className="w-[41px] border-l border-[#bbb] pl-[3px] leading-[12px]">Nodes</span>
              <span className="w-[41px] border-x border-[#bbb] pl-[3px] leading-[12px]">Edges</span>
            </div>
            <div className="flex h-[20px] shrink-0 items-center bg-[#005ccf] text-[12px] leading-[20px] text-white">
              <svg width="13" height="15" viewBox="0 0 13 15" className="mr-[4px] ml-[1px]">
                <path d="M.5.500H8L12.500 5V14.500H.5Z" fill="#f0f4fa" stroke="#456" />
                <path d="M8 .5V5H12.500" fill="#ccd8ec" stroke="#456" />
              </svg>
              <span className="h-[20px] w-[99px] bg-[#0aae0a] pt-px pl-px tracking-[0.100px]">RESULT_network</span>
              <span className="ml-[32px] w-[41px] pt-px tracking-[0.800px]">131…</span>
              <span className="pt-px tracking-[0.800px]">131…</span>
            </div>
          </div>
          <div className="flex h-[10px] shrink-0 justify-center bg-[#ececec] pt-[4px]">
            <i className="h-[3px] w-[4px] rounded-full bg-[#888]" />
          </div>
          <div className="h-[180px] w-[234px] shrink-0 bg-[#ccccff]">
            <svg width="234" height="180" viewBox="11 990 234 180" className="block">
              <g transform="translate(-30.600 981) scale(0.1855 0.1847)" stroke="#000" shapeRendering="crispEdges" className="[&_line]:[vector-effect:non-scaling-stroke]">
                <NetworkGraph />
              </g>
              <rect x="19.500" y="1001.500" width="217" height="157" fill="#0000ff" fillOpacity=".17" stroke="#0000ff" />
            </svg>
          </div>
        </div>
      </div>
    </aside>
  );
}

function NetworkWindow() {
  return (
    <section className="mt-[5px] ml-[12px] flex h-[871px] w-[1169px] flex-col overflow-hidden rounded-t-[4px]">
      <div className="grid h-[22px] shrink-0 grid-cols-[1fr_auto_1fr] items-center border-b border-[#666] bg-gradient-to-b from-[#e6e6e6] to-[#b4b4b4] px-[10px] text-[13px] text-black">
        <Lights />
        <span className="pt-px">RESULT_network</span>
      </div>
      <svg width="1169" height="849" viewBox="271 111 1169 849" className="block bg-[#ccccff]">
        <g stroke="#000" strokeWidth="3" shapeRendering="crispEdges">
          <NetworkGraph />
        </g>
        <path d="M1428 958.500L1438.500 948M1432 958.500L1438.500 952M1436 958.500L1438.500 956" stroke="#777" />
      </svg>
    </section>
  );
}

const columns = [
  { label: "ID", cls: "w-[75px] pr-[10px]" },
  { label: "ClusterID", cls: "w-[88px] pr-[11px]" },
  { label: "NodeType", cls: "w-[92px] pr-[10px]" },
  { label: "NodeURL", cls: "w-[87px] pr-[11px]" },
];

function DataPanel() {
  return (
    <section className="flex flex-1 flex-col">
      <div className="flex h-[9px] justify-center pt-[3px]">
        <i className="h-[3px] w-[4px] rounded-full bg-[#888]" />
      </div>
      <div className="flex h-[18px] items-center justify-between bg-[#cacaca] pr-[3px] pl-[6px] text-[12px] text-[#111]">
        <span className="pt-[2px]">Data Panel</span>
        <FloatIcon />
      </div>
      <div className="mt-[7px] mr-[8px] ml-[8px] flex h-[150px] flex-col rounded-[5px] border-2 border-[#cfcfcf] bg-[#e3e3e3] pt-[4px] pl-px">
        <div className="flex h-[32px] shrink-0 items-start justify-between bg-[#ececec] pt-[2px] pr-[4px] pl-[4px]">
          <div className="flex gap-[6px]">
            <Btn className="h-[27px] w-[32px]">
              <svg width="20" height="20" viewBox="0 0 20 20">
                <rect x=".8" y=".8" width="18.400" height="18.400" fill="#fff" stroke="#000" strokeWidth="1.500" />
                <path d="M6.500 1V19M13 1V19" stroke="#ccc" />
                <rect x="1.500" y="6" width="17" height="7" fill="#808080" />
                <path d="M6.500 6V13M13 6V13" stroke="#aaa" />
              </svg>
            </Btn>
            <Btn className="h-[28px] w-[32px]">
              <svg width="20" height="22" viewBox="0 0 20 22">
                <path d="M1 1H15L19 5V21H1Z" fill="#f0f0ec" stroke="#222" strokeWidth="1.400" />
                <path d="M15 1V5H19" fill="#bbb" stroke="#222" />
              </svg>
            </Btn>
            <Btn className="h-[28px] w-[32px]">
              <svg width="24" height="24" viewBox="0 0 24 24" fill="none" stroke="#000">
                <path d="M2 3H9V10H2ZM2 14H9V21H2Z" strokeWidth="1.900" />
                <path d="M12 6L16 10L23 3M12 17L16 21L23 14" strokeWidth="2" />
              </svg>
            </Btn>
            <Btn className="h-[28px] w-[32px]">
              <svg width="24" height="24" viewBox="0 0 24 24" fill="none" stroke="#000">
                <path d="M2 3H9V10H2ZM2 14H9V21H2Z" strokeWidth="1.900" />
              </svg>
            </Btn>
            <Btn className="h-[28px] w-[32px]">
              <svg width="22" height="25" viewBox="0 0 22 25">
                <path d="M2 7L3.500 22Q11 26 18.500 22L20 7Z" fill="#8c8c78" stroke="#222" />
                <path d="M6 10L6.500 22M10 10.500V23M14 10.500L13.500 23M17 10L16.500 22" stroke="#44443a" strokeWidth="1.300" />
                <ellipse cx="11" cy="7" rx="9.800" ry="4" fill="#c8c8b8" stroke="#222" />
                <ellipse cx="11" cy="5" rx="6" ry="2.500" fill="#e4e4d8" stroke="#666" />
                <path d="M8.500 4Q8.500 1 11 1Q13.500 1 13.500 4" fill="none" stroke="#222" strokeWidth="1.500" />
              </svg>
            </Btn>
          </div>
          <div className="flex gap-[6px]">
            <Btn className="h-[27px] w-[28px]">
              <svg width="22" height="20" viewBox="0 0 22 20">
                <rect x="1" y="1" width="20" height="18" fill="#f2f2f2" stroke="#000" strokeWidth="1.700" />
                <path d="M2 5H20M15 5V18M4 2V18M15 9.500H20M15 14H20" stroke="#aaa" />
                <path d="M5 6H14V9H5ZM5 10H14V13H5ZM5 14H14V17.500H5Z" fill="#ecca68" />
                <path d="M6.500 3.500H12.500L9.500 6.500Z" fill="#000" />
              </svg>
            </Btn>
            <Btn className="h-[27px] w-[28px]">
              <span className="font-['Liberation_Serif',serif] text-[18px] leading-[20px] font-bold text-black italic">
                f<span className="text-[12px] tracking-[-0.300px] text-[#555]">(x)</span>
              </span>
            </Btn>
            <Btn className="h-[27px] w-[28px]"><Folder w={24} /></Btn>
            <Btn className="h-[27px] w-[32px]">
              <svg width="24" height="24" viewBox="0 0 24 24">
                <rect width="24" height="24" fill="#000" />
                <g fill="#e8d020"><circle cx="3" cy="14.500" r="1.500" /><circle cx="16.500" cy="9.500" r="1.500" /><circle cx="21.500" cy="9.500" r="1.500" /><circle cx="21.500" cy="14" r="1.200" /></g>
                <g fill="#d04020"><circle cx="17" cy="1" r="1.400" /><circle cx="17" cy="4.500" r="1.400" /><circle cx="12" cy="23" r="1.400" /></g>
                <g fill="#a06818"><circle cx="3" cy="4.500" r="1.300" /><circle cx="7.500" cy="14.500" r="1.500" /><circle cx="3" cy="19" r="1.200" /><circle cx="12" cy="19" r="1.300" /></g>
                <g fill="#5a5a10"><circle cx="12" cy="1" r="1" /><circle cx="12" cy="4.500" r="1.200" /></g>
                <g fill="#48a030"><circle cx="7.500" cy="19" r="1.400" /></g>
                <circle cx="7.500" cy="4.500" r="1.100" fill="#184018" />
              </svg>
            </Btn>
          </div>
        </div>
        <div className="h-[98px] shrink-0 border border-[#999] border-t-[#555] bg-white">
          <div className="ml-px flex h-[17px] w-[343px] items-center border-b border-[#bbb] bg-gradient-to-b from-white via-[#f4f4f4] to-[#ececec] text-[11px] text-black">
            {columns.map((c) => (
              <span key={c.label} className={`border-r border-[#bbb] text-center leading-[12px] tracking-[0.200px] ${c.cls}`}>
                {c.label}
              </span>
            ))}
          </div>
        </div>
      </div>
      <div className="relative -mt-[6px] ml-[570px] flex h-[21px] w-[520px] overflow-hidden rounded-[4px] border border-[#777] bg-gradient-to-b from-white to-[#ededed] text-[13px] leading-[19px] text-black">
        <span className="w-[166px] border-r border-[#666] bg-gradient-to-b from-[#767676] to-[#9e9e9e] text-center tracking-[0.100px] text-[#f0f0f0] [text-shadow:0_1px_1px_#444]">Node Attribute Browser</span>
        <span className="w-[166px] text-center tracking-[0.100px]">Edge Attribute Browser</span>
        <i className="my-[3px] w-px bg-[#bbb]" />
        <span className="flex-1 text-center tracking-[0.100px]">Network Attribute Browser</span>
      </div>
    </section>
  );
}

export default function App() {
  return (
    <div className="flex h-[1200px] w-[1920px] flex-col overflow-hidden bg-[#ececec] font-['Open_Sans','Noto_Sans',sans-serif]">
      <MenuBar />
      <div className="grid h-[23px] shrink-0 grid-cols-[1fr_auto_1fr] items-center border-y border-t-[#888] border-b-[#666] bg-gradient-to-b from-[#e6e6e6] to-[#b4b4b4] px-[9px] text-[13px] text-[#4c4c4c]">
        <Lights />
        <span className="pt-px tracking-[0.250px]">Cytoscape Desktop (New Session)</span>
      </div>
      <Toolbar />
      <div className="flex h-[1094px] shrink-0">
        <ControlPanel />
        <main className="ml-[4px] flex w-[1661px] flex-col">
          <div className="h-[895px] shrink-0 overflow-hidden bg-[#4169a9]">
            <div className="[filter:drop-shadow(0_8px_9px_rgba(0,0,0,0.75))]">
              <NetworkWindow />
            </div>
          </div>
          <DataPanel />
        </main>
      </div>
      <footer className="flex h-[18px] shrink-0 items-center pt-[4px] pl-[7px] text-[11px] text-[#222]">
        <span className="w-[179px]">Welcome to Cytoscape 2.8.3</span>
        <span className="w-[293px]">Right-click + drag or Control-Click + drag to ZOOM</span>
        <span>Command-Click + drag to PAN</span>
      </footer>
      <div className="h-[4px] shrink-0 bg-[#151515]" />
    </div>
  );
}
